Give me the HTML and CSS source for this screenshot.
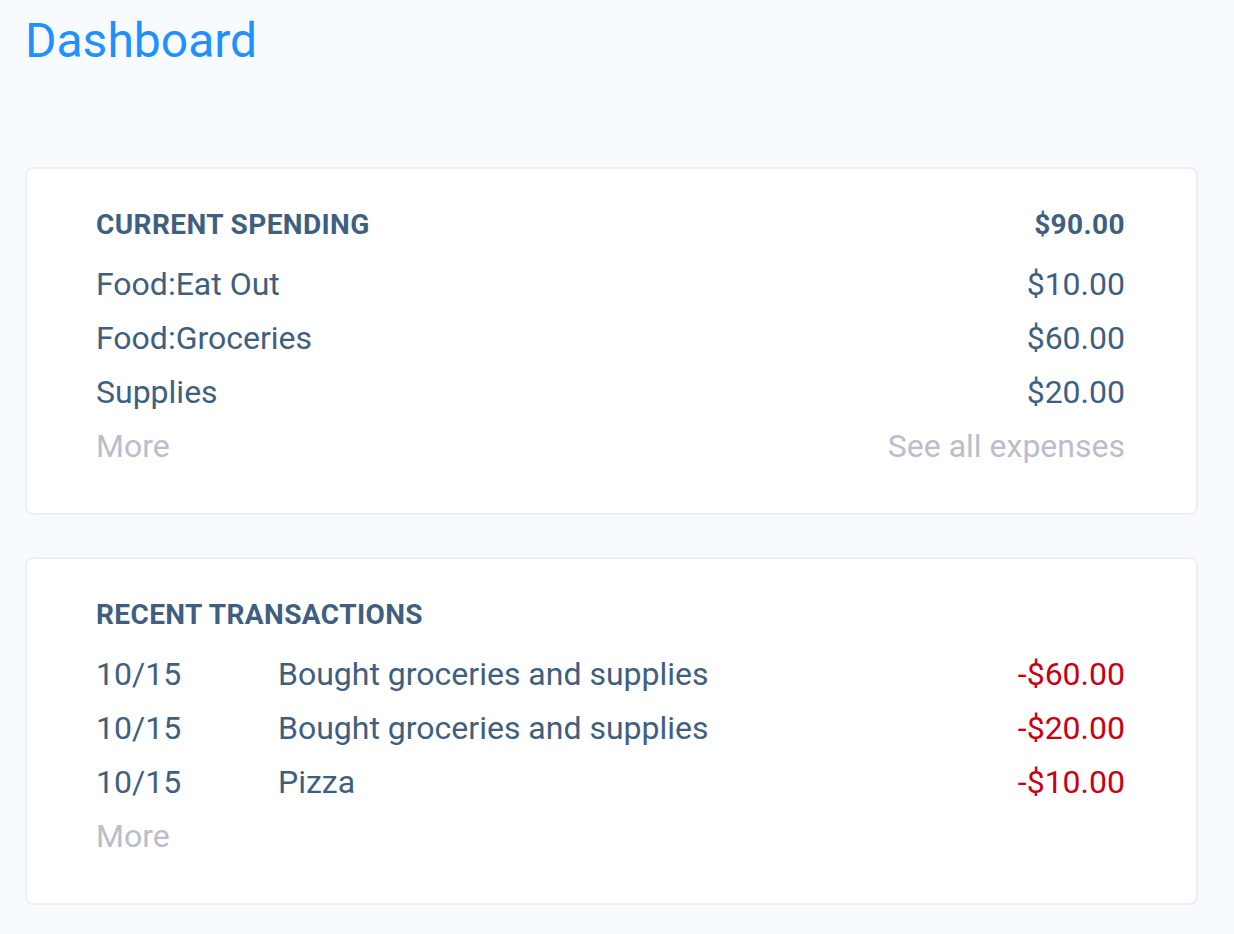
FILE: index.html
```html
<!DOCTYPE html>
<html>
<head>
<meta charset="utf-8">
<title>Dashboard</title>
<link rel="stylesheet" href="styles.css">
</head>
<body>
<h1 class="title">Dashboard</h1>
<section class="card">
  <div class="row head">
    <span>CURRENT SPENDING</span>
    <span>$90.00</span>
  </div>
  <div class="row"><span>Food:Eat Out</span><span>$10.00</span></div>
  <div class="row"><span>Food:Groceries</span><span>$60.00</span></div>
  <div class="row"><span>Supplies</span><span>$20.00</span></div>
  <div class="row muted"><span>More</span><span>See all expenses</span></div>
</section>
<section class="card">
  <div class="row head"><span>RECENT TRANSACTIONS</span></div>
  <div class="row tx"><span class="date">10/15</span><span class="desc">Bought groceries and supplies</span><span class="neg">-$60.00</span></div>
  <div class="row tx"><span class="date">10/15</span><span class="desc">Bought groceries and supplies</span><span class="neg">-$20.00</span></div>
  <div class="row tx"><span class="date">10/15</span><span class="desc">Pizza</span><span class="neg">-$10.00</span></div>
  <div class="row muted"><span>More</span></div>
</section>
</body>
</html>
```
FILE: styles.css
```css
html, body {
  margin: 0;
  padding: 0;
}
body {
  background: #f8fbfe;
  font-family: Roboto, "Liberation Sans", sans-serif;
  color: #3f5f80;
  padding: 0 36px 0 25px;
}
.title {
  margin: 0;
  padding-top: 11px;
  font-size: 48px;
  font-weight: 400;
  line-height: 60px;
  color: #1e90ff;
  height: 167px;
  box-sizing: border-box;
}
.card {
  background: #fff;
  border: 2px solid #efeff1;
  border-radius: 8px;
  height: 348px;
  box-sizing: border-box;
  padding: 29px 71px 0 69px;
  margin: 0 0 42px 0;
}
.row {
  display: flex;
  justify-content: space-between;
  font-size: 32px;
  line-height: 54px;
}
.row.head {
  font-size: 28px;
  letter-spacing: 0.4px;
  font-weight: 700;
  margin-bottom: 5px;
}
.muted {
  color: #bcbccc;
}
.tx .date {
  width: 182px;
  flex: none;
}
.tx .desc {
  flex: 1;
}
.neg {
  color: #cc0011;
}
```
